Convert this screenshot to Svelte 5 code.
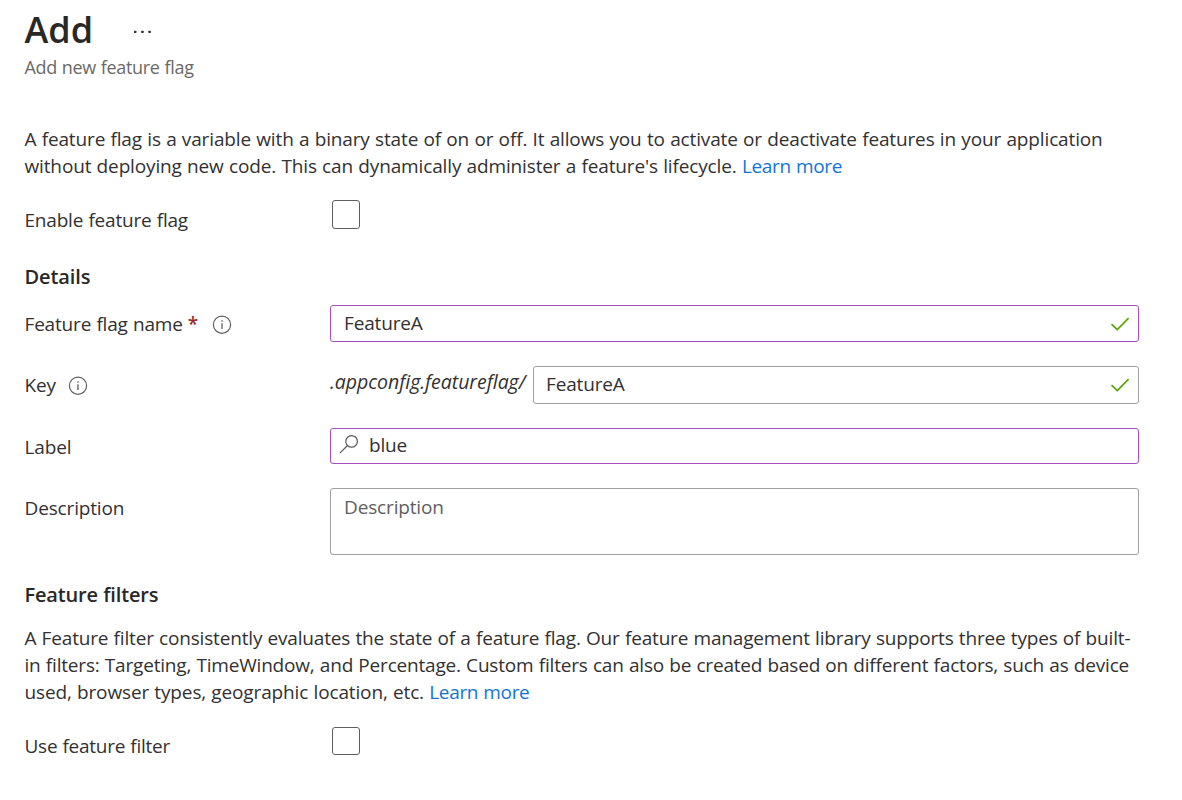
<script>
  let enabled = $state(false);
  let useFilter = $state(false);
</script>

{#snippet info()}
  <svg class="info" width="20" height="20" viewBox="0 0 20 20" fill="none" aria-hidden="true">
    <circle cx="10" cy="9.7" r="8.6" stroke="#5f5e5d" stroke-width="1.2" />
    <path d="M10 8.3V13.9M10 5.3V6.7" stroke="#5f5e5d" stroke-width="1.3" />
  </svg>
{/snippet}

{#snippet check()}
  <svg class="check" width="20" height="16" viewBox="0 0 20 16" fill="none" aria-hidden="true">
    <path d="M1.5 8.2L7.3 13.6L18.6 2.1" stroke="#57a300" stroke-width="1.6" />
  </svg>
{/snippet}

{#snippet box(on, toggle, label)}
  <button class="box" role="checkbox" aria-checked={on} aria-label={label} onclick={toggle}>
    {#if on}
      <svg width="20" height="16" viewBox="0 0 20 16" fill="none"><path d="M2 8L7.5 13L18 2.5" stroke="#323130" stroke-width="2" /></svg>
    {/if}
  </button>
{/snippet}

<main>
  <header>
    <div class="title">
      <h1>Add</h1>
      <svg width="20" height="4" viewBox="0 0 20 4" aria-hidden="true">
        <rect x="1" y="0.7" width="2.4" height="2.4" rx="0.5" />
        <rect x="8.2" y="0.7" width="2.4" height="2.4" rx="0.5" />
        <rect x="15.4" y="0.7" width="2.4" height="2.4" rx="0.5" />
      </svg>
    </div>
    <div class="subtitle">Add new feature flag</div>
  </header>

  <p>
    <span class="line s1">A feature flag is a variable with a binary state of on or off. It allows you to activate or deactivate features in your application</span>
    <span class="line s2">without deploying new code. This can dynamically administer a feature's lifecycle. <a href="#learn">Learn more</a></span>
  </p>

  <div class="row enable">
    <span class="label">Enable feature flag</span>
    {@render box(enabled, () => (enabled = !enabled), 'Enable feature flag')}
  </div>

  <h2 class="details">Details</h2>

  <div class="row name">
    <span class="label"><span class="t">Feature flag name</span><b class="req">*</b>{@render info()}</span>
    <div class="field active"><span>FeatureA</span>{@render check()}</div>
  </div>

  <div class="row key">
    <span class="label">Key{@render info()}</span>
    <div class="group">
      <i>.appconfig.featureflag/</i>
      <div class="field"><span>FeatureA</span>{@render check()}</div>
    </div>
  </div>

  <div class="row lab">
    <span class="label">Label</span>
    <div class="field active search">
      <svg width="20" height="20" viewBox="0 0 20 20" fill="none" aria-hidden="true">
        <circle cx="12.6" cy="7.4" r="5.8" stroke="#605e5c" stroke-width="1.2" />
        <path d="M8.5 11.5L0.9 19.1" stroke="#605e5c" stroke-width="1.2" />
      </svg>
      <span>blue</span>
    </div>
  </div>

  <div class="row desc">
    <span class="label">Description</span>
    <div class="field area"><span>Description</span></div>
  </div>

  <h2 class="filters">Feature filters</h2>

  <p class="second">
    <span class="line s3">A Feature filter consistently evaluates the state of a feature flag. Our feature management library supports three types of built-</span>
    <span class="line s4">in filters: Targeting, TimeWindow, and Percentage. Custom filters can also be created based on different factors, such as device</span>
    <span class="line s2">used, browser types, geographic location, etc. <a href="#filters">Learn more</a></span>
  </p>

  <div class="row use">
    <span class="label">Use feature filter</span>
    {@render box(useFilter, () => (useFilter = !useFilter), 'Use feature filter')}
  </div>
</main>

<style>
  :global(body) { margin: 0; background: #fff; }
  main {
    box-sizing: border-box;
    width: 1182px;
    height: 800px;
    padding-left: 24.5px;
    overflow: hidden;
    font: 19px/27px 'Open Sans', 'Noto Sans', sans-serif;
    color: #323130;
    font-variant-ligatures: none;
    white-space: nowrap;
    word-spacing: 0.5px;
  }
  header { height: 126px; }
  .title { display: flex; align-items: center; height: 57px; gap: 39.5px; }
  h1 { margin: 3px 0 0; font-size: 36px; line-height: 58px; font-weight: 600; color: #292827; }
  .title svg { margin-top: 6px; fill: #323130; }
  .subtitle { font-size: 18px; line-height: 20px; letter-spacing: -0.32px; color: #6b6967; }
  p { margin: 0; }
  .line { display: block; }
  .s1 { letter-spacing: -0.14px; }
  .s2 { letter-spacing: -0.14px; }
  .s3 { letter-spacing: -0.17px; }
  .s4 { letter-spacing: -0.187px; }
  a { color: #1474d4; text-decoration: none; letter-spacing: -0.33px; }

  .row { display: grid; grid-template-columns: 305.5px 809px; }
  .label { display: flex; align-items: flex-start; padding-top: 6px; letter-spacing: -0.15px; }
  .box {
    display: flex;
    align-items: center;
    justify-content: center;
    width: 28px;
    height: 29px;
    margin-left: 2px;
    padding: 0;
    border: 1.4px solid #605e5c;
    border-radius: 3px;
    background: #fff;
  }
  h2 { margin: 0; font-size: 20px; line-height: 27px; font-weight: 600; color: #292827; }

  .enable { margin-top: 20px; height: 29px; }
  .enable .label { padding-top: 7px; letter-spacing: -0.2px; }
  .details { margin-top: 34px; letter-spacing: -0.08px; }
  .name { margin-top: 15px; height: 37px; }
  .name .t { letter-spacing: -0.18px; }
  .req { margin-left: 5px; color: #a4262c; font-weight: 600; }
  .info { flex: none; margin: 4px 0 0 14px; }
  .key .info { margin-left: 12.5px; }
  .key { margin-top: 24px; height: 38px; }
  .group { display: grid; grid-template-columns: 203px 606px; }
  i { font-size: 19.5px; line-height: 27px; padding-top: 2px; letter-spacing: -0.04px; }
  .lab { margin-top: 24px; height: 36px; }
  .desc { margin-top: 24px; height: 67px; }
  .desc .label { padding-top: 7px; }

  .field {
    box-sizing: border-box;
    display: flex;
    align-items: flex-start;
    justify-content: space-between;
    padding: 4px 8px 0 13px;
    border: 1px solid #a19f9d;
    border-radius: 3px;
    background: #fff;
    letter-spacing: -0.15px;
  }
  .group .field { padding-left: 12px; }
  .active { border-color: #a44fc0; }
  .check { margin-top: 6px; }
  .search { justify-content: flex-start; gap: 10px; padding: 3px 8px 0 8px; }
  .search svg { margin-top: 2px; }
  .area { padding-top: 5px; color: #605e5c; }

  .filters { margin-top: 26px; letter-spacing: -0.18px; }
  .second { margin-top: 17px; }
  .use { margin-top: 21px; height: 28px; }
  .use .label { letter-spacing: -0.26px; }
  .use .box { height: 28px; }
</style>
